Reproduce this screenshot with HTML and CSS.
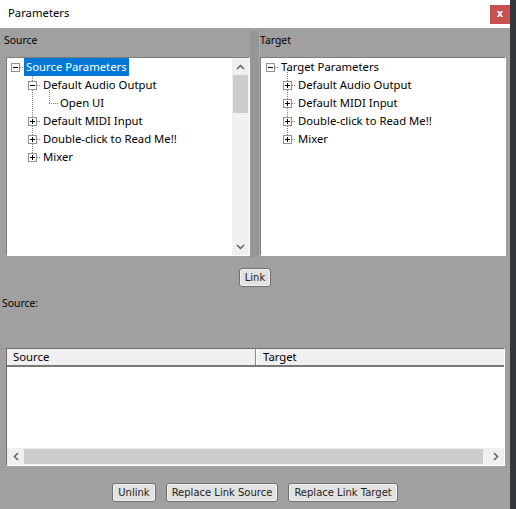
FILE: index.html
```html
<!DOCTYPE html>
<html>
<head>
<meta charset="utf-8">
<link rel="stylesheet" href="styles.css">
</head>
<body>
<div class="screen">
  <div class="window">
    <div class="titlebar">
      <span class="title">Parameters</span>
      <span class="close">x</span>
    </div>
    <div class="content">
      <div class="panes">
        <div class="pane pane-source">
          <div class="pane-label label-source">Source</div>
          <div class="tree-box">
            <div class="tree">
              <svg class="guides" width="225" height="197" viewBox="0 0 225 197">
                <g stroke="#808080" stroke-width="1" stroke-dasharray="1 1" fill="none" shape-rendering="crispEdges">
                  <path d="M13 9.5H17"/>
                  <path d="M25.5 10V96"/>
                  <path d="M30 27.5H34M30 63.5H34M30 81.5H34M30 99.5H34"/>
                  <path d="M42.5 32V46"/>
                  <path d="M42 45.5H51"/>
                </g>
              </svg>
              <div class="row lvl0"><span class="exp minus"></span><span class="lbl sel">Source Parameters</span></div>
              <div class="row lvl1"><span class="exp minus"></span><span class="lbl">Default Audio Output</span></div>
              <div class="row lvl2"><span class="exp leaf"></span><span class="lbl">Open UI</span></div>
              <div class="row lvl1"><span class="exp plus"></span><span class="lbl">Default MIDI Input</span></div>
              <div class="row lvl1"><span class="exp plus"></span><span class="lbl">Double-click to Read Me!!</span></div>
              <div class="row lvl1"><span class="exp plus"></span><span class="lbl">Mixer</span></div>
            </div>
            <div class="vscroll">
              <div class="sbtn"><svg width="9" height="6" viewBox="0 0 9 6"><path d="M1 5L4.5 1.5L8 5" stroke="#606060" stroke-width="1.5" fill="none"/></svg></div>
              <div class="vtrack"><div class="vthumb"></div></div>
              <div class="sbtn"><svg width="9" height="6" viewBox="0 0 9 6"><path d="M1 1L4.5 4.5L8 1" stroke="#606060" stroke-width="1.5" fill="none"/></svg></div>
            </div>
          </div>
        </div>
        <div class="splitter"></div>
        <div class="pane pane-target">
          <div class="pane-label">Target</div>
          <div class="tree-box tree-box-target">
            <div class="tree">
              <svg class="guides" width="244" height="197" viewBox="0 0 244 197">
                <g stroke="#808080" stroke-width="1" stroke-dasharray="1 1" fill="none" shape-rendering="crispEdges">
                  <path d="M13 9.5H17"/>
                  <path d="M25.5 10V78"/>
                  <path d="M30 27.5H34M30 45.5H34M30 63.5H34M30 81.5H34"/>
                </g>
              </svg>
              <div class="row lvl0"><span class="exp minus"></span><span class="lbl">Target Parameters</span></div>
              <div class="row lvl1"><span class="exp plus"></span><span class="lbl">Default Audio Output</span></div>
              <div class="row lvl1"><span class="exp plus"></span><span class="lbl">Default MIDI Input</span></div>
              <div class="row lvl1"><span class="exp plus"></span><span class="lbl">Double-click to Read Me!!</span></div>
              <div class="row lvl1"><span class="exp plus"></span><span class="lbl">Mixer</span></div>
            </div>
          </div>
        </div>
      </div>
      <div class="link-row"><button class="btn">Link</button></div>
      <div class="status">Source:</div>
      <div class="listview">
        <div class="lv-header">
          <div class="lv-col lv-col-source">Source</div>
          <div class="lv-col lv-col-target">Target</div>
        </div>
        <div class="lv-body"></div>
        <div class="hscroll">
          <div class="hbtn"><svg width="6" height="9" viewBox="0 0 6 9"><path d="M5 1L1.5 4.5L5 8" stroke="#606060" stroke-width="1.5" fill="none"/></svg></div>
          <div class="hthumb"></div>
          <div class="hgap"></div>
          <div class="hbtn"><svg width="6" height="9" viewBox="0 0 6 9"><path d="M1 1L4.5 4.5L1 8" stroke="#606060" stroke-width="1.5" fill="none"/></svg></div>
        </div>
      </div>
      <div class="actions">
        <button class="btn">Unlink</button>
        <button class="btn">Replace Link Source</button>
        <button class="btn">Replace Link Target</button>
      </div>
    </div>
  </div>
  <div class="edge"></div>
</div>
</body>
</html>
```

FILE: styles.css
```css
html, body {
  margin: 0;
  padding: 0;
}
body {
  width: 516px;
  height: 509px;
  overflow: hidden;
  font-family: "Noto Sans", "Liberation Sans", sans-serif;
  color: #000;
}
.screen {
  display: flex;
  height: 509px;
}
.window {
  width: 510px;
  background: #a0a0a0;
  display: flex;
  flex-direction: column;
}
.edge {
  width: 6px;
  background: #34383c;
}
.titlebar {
  height: 28px;
  background: #fff;
  display: flex;
  align-items: flex-start;
  padding-left: 8px;
  box-sizing: border-box;
}
.title {
  font-size: 11.3px;
  line-height: 16px;
  margin-top: 5px;
}
.close {
  margin-left: auto;
  margin-top: 5px;
  width: 20px;
  height: 19px;
  background: #c75050;
  color: #fff;
  font-family: "DejaVu Sans", sans-serif;
  font-weight: bold;
  font-size: 10px;
  line-height: 18px;
  text-align: center;
}
.content {
  padding: 0 4px 0 6px;
  display: flex;
  flex-direction: column;
}
.panes {
  display: flex;
}
.pane {
  display: flex;
  flex-direction: column;
}
.pane-source {
  width: 244px;
}
.pane-target {
  width: 246px;
}
.pane-label {
  margin-top: 4px;
  height: 16px;
  line-height: 16px;
  font-size: 10.4px;
  margin-bottom: 9px;
}
.label-source {
  margin-left: -2px;
}
.splitter {
  width: 10px;
  margin-top: 3px;
  height: 226px;
  background: #969696;
  box-sizing: border-box;
  border-right: 1px solid #a9a9a9;
}
.tree-box {
  height: 199px;
  box-sizing: border-box;
  border-top: 1px solid #7d7d7d;
  border-left: 1px solid #7d7d7d;
  border-right: 1px solid #fff;
  border-bottom: 1px solid #fff;
  background: #fff;
  display: flex;
}
.tree {
  position: relative;
  flex: 1;
}
.tree-box-target .tree {
  padding-left: 1px;
}
.tree-box-target .guides {
  left: 1px;
}
.guides {
  position: absolute;
  left: 0;
  top: 0;
  z-index: 0;
}
.row {
  height: 18px;
  display: flex;
  align-items: center;
  font-size: 11.3px;
  white-space: nowrap;
}
.lvl0 { padding-left: 4px; }
.lvl1 { padding-left: 21px; }
.lvl2 { padding-left: 38px; }
.exp {
  position: relative;
  z-index: 1;
  width: 9px;
  height: 9px;
  box-sizing: border-box;
  border: 1px solid #919191;
  background: #fff;
  margin-right: 4px;
  flex: none;
}
.exp.leaf {
  border: none;
  background: transparent;
}
.exp.minus::before,
.exp.plus::before {
  content: "";
  position: absolute;
  left: 1px;
  top: 3px;
  width: 5px;
  height: 1px;
  background: #000;
}
.exp.plus::after {
  content: "";
  position: absolute;
  left: 3px;
  top: 1px;
  width: 1px;
  height: 5px;
  background: #000;
}
.lbl {
  position: relative;
  z-index: 1;
  height: 18px;
  line-height: 18px;
  padding: 0 2px;
}
.lbl.sel {
  background: #0078d7;
  color: #fff;
}
.vscroll {
  width: 17px;
  background: #f0f0f0;
  display: flex;
  flex-direction: column;
}
.sbtn {
  height: 17px;
  display: flex;
  align-items: center;
  justify-content: center;
  flex: none;
}
.vtrack {
  flex: 1;
  padding: 0 1px;
}
.vthumb {
  height: 38px;
  background: #cdcdcd;
}
.link-row {
  display: flex;
  justify-content: center;
  margin-top: 11px;
  margin-left: -6px;
  margin-right: -4px;
}
.btn {
  font-family: "DejaVu Sans", "Verdana", sans-serif;
  font-size: 10px;
  height: 19px;
  padding: 0 5px;
  margin: 0;
  border: 1px solid #6f6f6f;
  border-radius: 3px;
  background: #e1e1e1;
  color: #222;
  box-shadow: inset 0 0 0 1px #f2f2f2;
  line-height: 15px;
}
.status {
  margin-top: 8px;
  margin-left: -4px;
  height: 16px;
  line-height: 16px;
  font-size: 10.4px;
}
.listview {
  margin-top: 37px;
  width: 499px;
  height: 118px;
  box-sizing: border-box;
  border-top: 1px solid #6d6d6d;
  border-left: 1px solid #6d6d6d;
  border-right: 1px solid #fff;
  border-bottom: 1px solid #fff;
  background: #fff;
  display: flex;
  flex-direction: column;
}
.lv-header {
  height: 18px;
  box-sizing: border-box;
  border-bottom: 2px solid #787878;
  background: #f0f0f0;
  display: flex;
  font-size: 11.3px;
}
.lv-col {
  line-height: 16px;
  white-space: nowrap;
}
.lv-col-source {
  width: 249px;
  padding-left: 6px;
  box-sizing: border-box;
  border-right: 1px solid #8a8a8a;
}
.lv-col-target {
  flex: 1;
  padding-left: 6px;
  border-left: 1px solid #fff;
}
.lv-body {
  flex: 1;
}
.hscroll {
  height: 17px;
  background: #f0f0f0;
  display: flex;
}
.hbtn {
  width: 17px;
  display: flex;
  align-items: center;
  justify-content: center;
  flex: none;
}
.hthumb {
  width: 459px;
  margin: 1px 0;
  background: #cdcdcd;
}
.hgap {
  flex: 1;
}
.actions {
  margin-top: 17px;
  margin-left: -6px;
  margin-right: -4px;
  display: flex;
  justify-content: center;
  gap: 10px;
}
```
